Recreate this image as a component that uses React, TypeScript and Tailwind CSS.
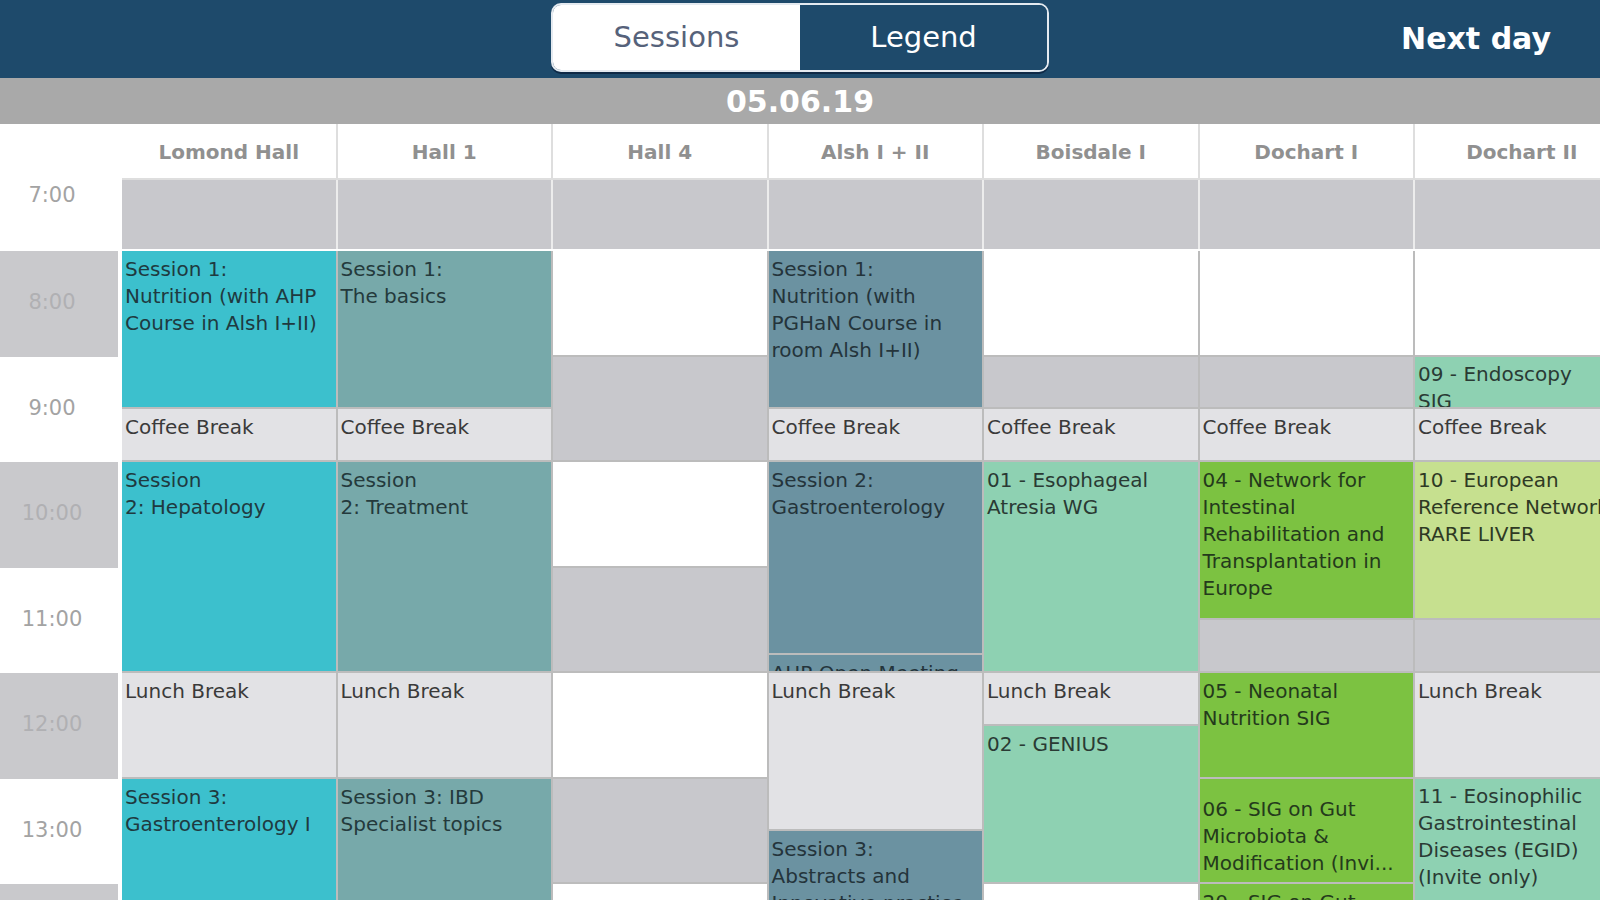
import React from 'react'

type Kind = 'empty' | 'free' | 'break' | 'cyan' | 'teal' | 'slate' | 'mint' | 'green' | 'lime'
type Block = [number, number, Kind, string?, string?]

// one hour = 105.5px, 8:00 starts the session grid
const SCALE = 105.5 / 60

const fill: Record<Kind, string> = {
  empty: 'bg-[#c8c8cc]',
  free: 'bg-white',
  break: 'bg-[#e2e2e5] text-[#3a3a3a]',
  cyan: 'bg-[#3cc0cd] text-[#1f3a40]',
  teal: 'bg-[#77a9aa] text-[#243a3c]',
  slate: 'bg-[#6b92a1] text-[#24343b]',
  mint: 'bg-[#8ed1b2] text-[#2a3a34]',
  green: 'bg-[#7cc241] text-[#243a1c]',
  lime: 'bg-[#c6e08f] text-[#2f3a24]',
}

const rooms: { name: string; blocks: Block[] }[] = [
  {
    name: 'Lomond Hall',
    blocks: [
      [480, 570, 'cyan', 'Session 1:\nNutrition (with AHP\nCourse in Alsh I+II)'],
      [570, 600, 'break', 'Coffee Break'],
      [600, 720, 'cyan', 'Session\n2: Hepatology'],
      [720, 780, 'break', 'Lunch Break'],
      [780, 900, 'cyan', 'Session 3:\nGastroenterology I'],
    ],
  },
  {
    name: 'Hall 1',
    blocks: [
      [480, 570, 'teal', 'Session 1:\nThe basics'],
      [570, 600, 'break', 'Coffee Break'],
      [600, 720, 'teal', 'Session\n2: Treatment'],
      [720, 780, 'break', 'Lunch Break'],
      [780, 900, 'teal', 'Session 3: IBD\nSpecialist topics'],
    ],
  },
  {
    name: 'Hall 4',
    blocks: [
      [480, 540, 'free'],
      [540, 600, 'empty'],
      [600, 660, 'free'],
      [660, 720, 'empty'],
      [720, 780, 'free'],
      [780, 840, 'empty'],
      [840, 900, 'free'],
    ],
  },
  {
    name: 'Alsh I + II',
    blocks: [
      [480, 570, 'slate', 'Session 1:\nNutrition (with\nPGHaN Course in\nroom Alsh I+II)'],
      [570, 600, 'break', 'Coffee Break'],
      [600, 710, 'slate', 'Session 2:\nGastroenterology'],
      [710, 720, 'slate', 'AHP Open Meeting'],
      [720, 810, 'break', 'Lunch Break'],
      [810, 900, 'slate', 'Session 3:\nAbstracts and\nInnovative practice'],
    ],
  },
  {
    name: 'Boisdale I',
    blocks: [
      [480, 540, 'free'],
      [540, 570, 'empty'],
      [570, 600, 'break', 'Coffee Break'],
      [600, 720, 'mint', '01 - Esophageal\nAtresia WG'],
      [720, 750, 'break', 'Lunch Break'],
      [750, 840, 'mint', '02 - GENIUS'],
      [840, 900, 'free'],
    ],
  },
  {
    name: 'Dochart I',
    blocks: [
      [480, 540, 'free'],
      [540, 570, 'empty'],
      [570, 600, 'break', 'Coffee Break'],
      [600, 690, 'green', '04 - Network for\nIntestinal\nRehabilitation and\nTransplantation in\nEurope'],
      [690, 720, 'empty'],
      [720, 780, 'green', '05 - Neonatal\nNutrition SIG'],
      [780, 840, 'green', '06 - SIG on Gut\nMicrobiota &\nModification (Invi...', 'pt-[17px]'],
      [840, 900, 'green', '20 - SIG on Gut\nMicrobiota'],
    ],
  },
  {
    name: 'Dochart II',
    blocks: [
      [480, 540, 'free'],
      [540, 570, 'mint', '09 - Endoscopy\nSIG', 'pt-[4px]'],
      [570, 600, 'break', 'Coffee Break'],
      [600, 690, 'lime', '10 - European\nReference Network\nRARE LIVER'],
      [690, 720, 'empty'],
      [720, 780, 'break', 'Lunch Break'],
      [780, 900, 'mint', '11 - Eosinophilic\nGastrointestinal\nDiseases (EGID)\n(Invite only)', 'pt-[4px]'],
    ],
  },
]

const hours = ['8:00', '9:00', '10:00', '11:00', '12:00', '13:00', '']

const TimeColumn = () => (
  <div className="w-[118px] shrink-0 flex flex-col bg-white">
    <div className="h-[127px] pt-[21px]">
      <div className="h-[105.5px] flex items-center justify-center pr-[14px] pb-[4px] text-[21px] text-[#a3a3a3]">
        7:00
      </div>
    </div>
    {hours.map((h, i) => (
      <div
        key={i}
        className={`h-[105.5px] shrink-0 flex items-center justify-center pr-[14px] pb-[2px] text-[21px] ${
          i % 2 === 0 ? 'bg-[#c9c9cc] text-[#b0b0b3]' : 'bg-white text-[#a3a3a3]'
        }`}
      >
        {h}
      </div>
    ))}
  </div>
)

export default function App() {
  return (
    <div
      className="h-screen w-screen overflow-hidden bg-white"
      style={{ fontFamily: '"DejaVu Sans", "Liberation Sans", sans-serif' }}
    >
      <header className="h-[78px] bg-[#1e4a6b] grid grid-cols-[1fr_auto_1fr] items-start">
        <div />
        <div className="mt-[3px] w-[498px] h-[69px] flex rounded-[10px] border-2 border-[#e4eaf0] overflow-hidden shadow-[0_2px_0_#0f2a47]">
          <div className="flex-1 bg-white flex items-center justify-center text-[29px] text-[#56627a]">
            Sessions
          </div>
          <div className="flex-1 bg-[#1e4a6b] flex items-center justify-center text-[29px] text-white">
            Legend
          </div>
        </div>
        <div className="justify-self-end self-center pr-[49px] pb-[1px] text-[30px] font-bold text-white">
          Next day
        </div>
      </header>

      <div className="h-[46px] bg-[#a9a9a9] flex items-center justify-center text-[30px] font-bold text-white">
        05.06.19
      </div>

      <div className="flex">
        <TimeColumn />
        <div className="ml-[4px] flex flex-col">
          <div className="flex gap-[2px] bg-[#dedede]">
            {rooms.map((r) => (
              <div
                key={r.name}
                className="w-[213.5px] shrink-0 h-[54px] pt-[2px] bg-white flex items-center justify-center text-[20px] font-bold text-[#909090] whitespace-nowrap"
              >
                {r.name}
              </div>
            ))}
          </div>
          <div className="h-[2px] bg-[#dedede]" />
          <div className="flex gap-[2px] bg-[#ececec]">
            {rooms.map((r) => (
              <div key={r.name} className="w-[213.5px] shrink-0 h-[69px] bg-[#c8c8cc]" />
            ))}
          </div>
          <div className="h-[2px] bg-white" />
          <div className="flex gap-[2px] bg-[#bcbcbc]">
            {rooms.map((r) => (
              <div key={r.name} className="w-[213.5px] shrink-0 flex flex-col gap-[2px]">
                {r.blocks.map(([start, end, kind, text, pad], i) => (
                  <div
                    key={i}
                    className={`shrink-0 overflow-hidden px-[3px] text-[20px] leading-[27px] whitespace-pre ${
                      pad ?? 'pt-[5px]'
                    } ${fill[kind]}`}
                    style={{ height: (end - start) * SCALE - 2 }}
                  >
                    {text}
                  </div>
                ))}
              </div>
            ))}
          </div>
        </div>
      </div>
    </div>
  )
}
